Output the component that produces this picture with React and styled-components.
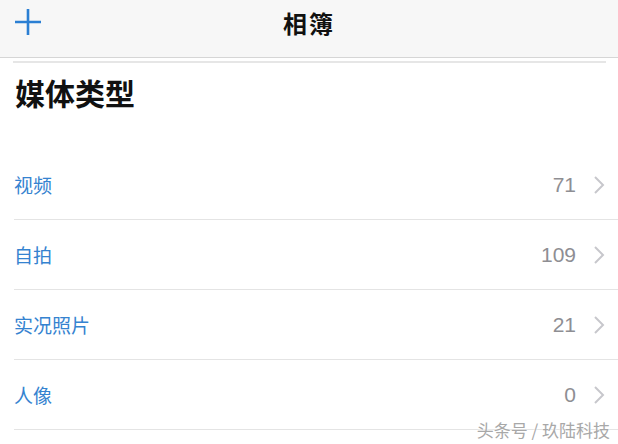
import styled, { createGlobalStyle } from "styled-components";

const GlobalStyle = createGlobalStyle`
  html, body {
    margin: 0;
    padding: 0;
    background: #fff;
  }
  body {
    font-family: "Noto Sans CJK SC", "Noto Sans", sans-serif;
  }
`;

const items = [
  { name: "视频", count: 71 },
  { name: "自拍", count: 109 },
  { name: "实况照片", count: 21 },
  { name: "人像", count: 0 },
];

const App = () => {
  return (
    <Page>
      <GlobalStyle />
      <NavBar>
        <AddButton aria-label="添加">
          <svg width="28" height="28" viewBox="0 0 28 28">
            <path d="M14 1v26M1 14h26" stroke="#2b7fd3" strokeWidth="2.6" fill="none" />
          </svg>
        </AddButton>
        <Title>相簿</Title>
      </NavBar>
      <TopRule />
      <Heading>媒体类型</Heading>
      <List>
        {items.map((item) => (
          <Row key={item.name}>
            <Label>{item.name}</Label>
            <Count>{item.count}</Count>
            <Chevron width="12" height="20" viewBox="0 0 12 20">
              <path d="M2 2l8 8-8 8" stroke="#c7c7cc" strokeWidth="2" fill="none" />
            </Chevron>
          </Row>
        ))}
      </List>
      <Watermark>头条号 / 玖陆科技</Watermark>
    </Page>
  );
};

const Page = styled.div`
  position: relative;
  width: 618px;
  height: 444px;
  overflow: hidden;
  background: #fff;
`;

const NavBar = styled.div`
  position: relative;
  display: flex;
  align-items: center;
  justify-content: center;
  height: 57px;
  background: #f7f7f7;
  border-bottom: 1px solid #d6d6d6;
`;

const AddButton = styled.div`
  position: absolute;
  left: 14px;
  top: 8px;
  width: 28px;
  height: 28px;
  display: flex;
`;

const Title = styled.div`
  margin-top: -13px;
  font-size: 24px;
  font-weight: 700;
  color: #111;
  letter-spacing: 2px;
`;

const TopRule = styled.div`
  height: 2px;
  margin: 3px 12px 0 13px;
  background: #e6e6e6;
`;

const Heading = styled.div`
  height: 87px;
  padding: 7px 0 0 15px;
  box-sizing: border-box;
  font-size: 30px;
  font-weight: 700;
  color: #111;
  line-height: 44px;
`;

const List = styled.div`
  display: flex;
  flex-direction: column;
`;

const Row = styled.div`
  display: flex;
  align-items: center;
  height: 69px;
  margin-left: 14px;
  padding-right: 13px;
  border-bottom: 1px solid #e4e4e4;
`;

const Label = styled.div`
  flex: 1;
  font-size: 19px;
  color: #3583d0;
`;

const Count = styled.div`
  font-family: "Liberation Sans", "Noto Sans", sans-serif;
  font-size: 21px;
  color: #8e8e93;
  margin-right: 17px;
`;

const Chevron = styled.svg`
  display: block;
`;

const Watermark = styled.div`
  position: absolute;
  right: 8px;
  bottom: 2px;
  font-size: 17px;
  color: #a8a8a8;
  text-shadow: 0 0 2px #fff, 0 0 2px #fff;
`;

export default App;
